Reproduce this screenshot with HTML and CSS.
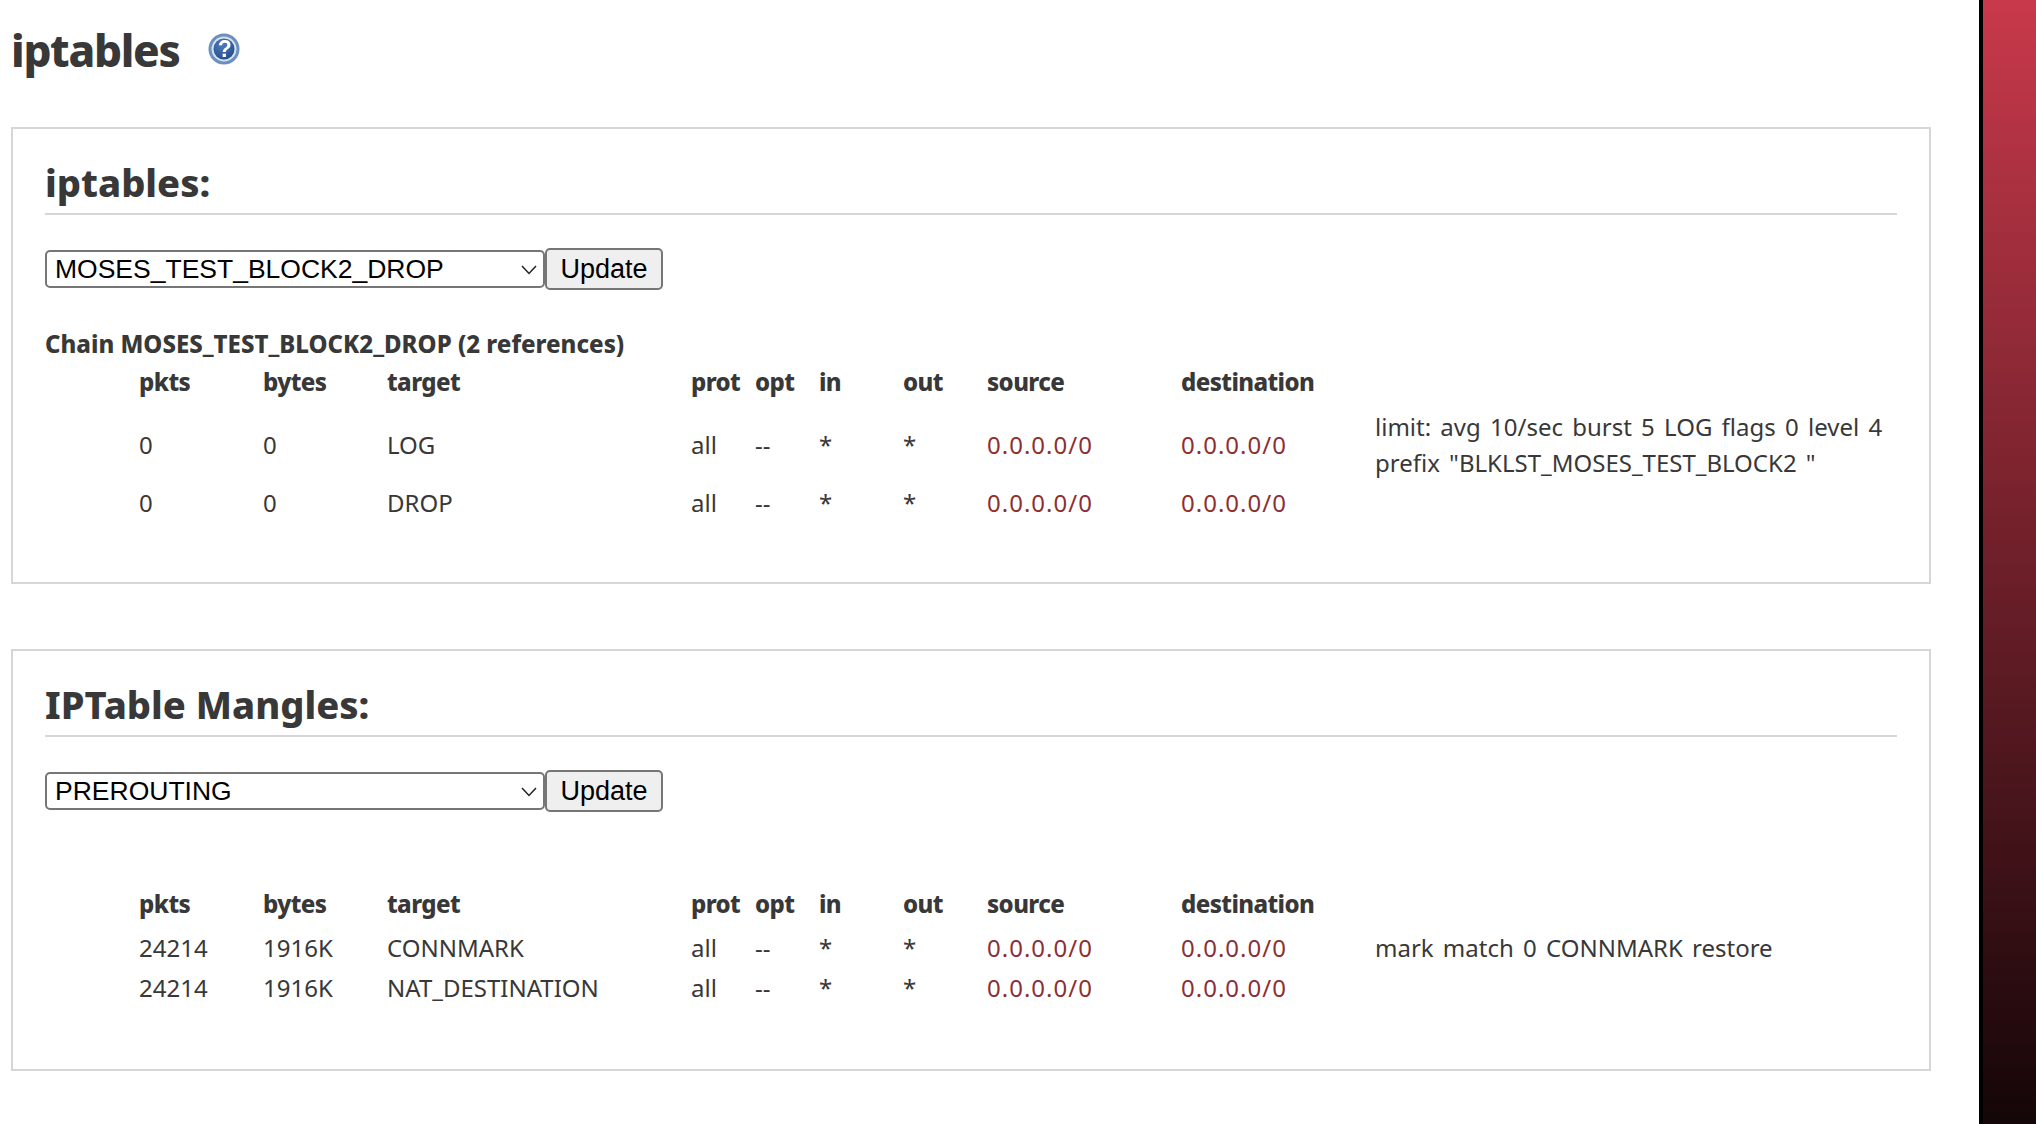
FILE: index.html
```html
<!DOCTYPE html>
<html lang="en">
<head>
    <meta charset="UTF-8">
    <title>iptables</title>
    <link rel="stylesheet" href="styles.css">
</head>
<body>
    <div class="layout">
        <main class="content">
            <h1 class="page-title">iptables
                <svg class="help-icon" viewBox="0 0 32 32" width="32" height="32">
                    <defs>
                        <radialGradient id="helpFill" cx="40%" cy="30%" r="75%">
                            <stop offset="0" stop-color="#4f7cb8"/>
                            <stop offset="1" stop-color="#254c8c"/>
                        </radialGradient>
                        <filter id="soften"><feGaussianBlur stdDeviation="0.45"/></filter>
                    </defs>
                    <g filter="url(#soften)">
                        <circle cx="16" cy="16" r="15.5" fill="#6a8fc0"/>
                        <circle cx="16" cy="16" r="12.5" fill="#d5e0ee"/>
                        <circle cx="16" cy="16" r="10.5" fill="url(#helpFill)"/>
                        <text x="16" y="24" text-anchor="middle" class="help-mark">?</text>
                    </g>
                </svg>
            </h1>

            <section class="panel">
                <h2 class="panel-title">iptables:</h2>
                <form class="chain-form">
                    <div class="select-wrap">
                        <select><option>MOSES_TEST_BLOCK2_DROP</option></select>
                        <svg class="select-arrow" viewBox="0 0 16 10" width="16" height="10"><path d="M1 1l7 7.5L15 1" fill="none" stroke="#222" stroke-width="1.5"/></svg>
                    </div>
                    <button type="button">Update</button>
                </form>
                <h4 class="chain-name">Chain MOSES_TEST_BLOCK2_DROP (2 references)</h4>
                <table class="rules">
                    <tr>
                        <th class="c-pkts">pkts</th><th class="c-bytes">bytes</th><th class="c-target">target</th>
                        <th class="c-prot">prot</th><th class="c-opt">opt</th><th class="c-in">in</th><th class="c-out">out</th>
                        <th class="c-source">source</th><th class="c-dest">destination</th><th class="c-extra"></th>
                    </tr>
                    <tr class="row-long">
                        <td>0</td><td>0</td><td>LOG</td><td>all</td><td>--</td><td>*</td><td>*</td>
                        <td class="addr">0.0.0.0/0</td><td class="addr">0.0.0.0/0</td>
                        <td>limit: avg 10/sec burst 5 LOG flags 0 level 4<br>prefix "BLKLST_MOSES_TEST_BLOCK2 "</td>
                    </tr>
                    <tr class="row-short">
                        <td>0</td><td>0</td><td>DROP</td><td>all</td><td>--</td><td>*</td><td>*</td>
                        <td class="addr">0.0.0.0/0</td><td class="addr">0.0.0.0/0</td><td></td>
                    </tr>
                </table>
            </section>

            <section class="panel panel-mangle">
                <h2 class="panel-title">IPTable Mangles:</h2>
                <form class="chain-form">
                    <div class="select-wrap">
                        <select><option>PREROUTING</option></select>
                        <svg class="select-arrow" viewBox="0 0 16 10" width="16" height="10"><path d="M1 1l7 7.5L15 1" fill="none" stroke="#222" stroke-width="1.5"/></svg>
                    </div>
                    <button type="button">Update</button>
                </form>
                <div class="chain-name-empty"></div>
                <table class="rules">
                    <tr>
                        <th class="c-pkts">pkts</th><th class="c-bytes">bytes</th><th class="c-target">target</th>
                        <th class="c-prot">prot</th><th class="c-opt">opt</th><th class="c-in">in</th><th class="c-out">out</th>
                        <th class="c-source">source</th><th class="c-dest">destination</th><th class="c-extra"></th>
                    </tr>
                    <tr class="row-tight">
                        <td>24214</td><td>1916K</td><td>CONNMARK</td><td>all</td><td>--</td><td>*</td><td>*</td>
                        <td class="addr">0.0.0.0/0</td><td class="addr">0.0.0.0/0</td>
                        <td>mark match 0 CONNMARK restore</td>
                    </tr>
                    <tr class="row-tight">
                        <td>24214</td><td>1916K</td><td>NAT_DESTINATION</td><td>all</td><td>--</td><td>*</td><td>*</td>
                        <td class="addr">0.0.0.0/0</td><td class="addr">0.0.0.0/0</td><td></td>
                    </tr>
                </table>
            </section>
        </main>
        <aside class="sidebar"></aside>
    </div>
</body>
</html>
```

FILE: styles.css
```css
*{
    margin: 0;
    padding: 0;
    box-sizing: border-box;
}

html, body{
    height: 100%;
    overflow: hidden;
}

body{
    background: #fff;
    color: #383838;
    font-family: "Noto Sans", "Open Sans", sans-serif;
    font-size: 24px;
    word-spacing: 3px;
}

.layout{
    display: flex;
    height: 1124px;
}

.content{
    flex: 1;
    padding: 0 48px 0 11px;
}

.sidebar{
    width: 57px;
    border-left: 4px solid #000;
    background: linear-gradient(#c8394b, #000) 0 0 / 100% 1250px no-repeat;
}

.page-title{
    display: flex;
    align-items: center;
    height: 100px;
    font-size: 44px;
    font-weight: 800;
    letter-spacing: -1.3px;
}

.help-icon{
    margin-left: 28px;
    margin-bottom: 2px;
}

.help-mark{
    fill: #fff;
    font-family: "Liberation Sans", sans-serif;
    font-size: 23px;
    font-weight: 700;
}

.panel{
    height: 457px;
    margin-top: 27px;
    padding: 28px 32px 0;
    border: 2px solid #d6d6d6;
}

.panel-mangle{
    height: 422px;
    margin-top: 65px;
}

.panel-title{
    height: 58px;
    border-bottom: 2px solid #d6d6d6;
    font-size: 38px;
    font-weight: 800;
    line-height: 50px;
    word-spacing: 0;
}

.chain-form{
    display: flex;
    align-items: center;
    margin-top: 33px;
}

.select-wrap{
    position: relative;
    display: flex;
}

.select-wrap select{
    width: 500px;
    height: 38px;
    padding-left: 8px;
    appearance: none;
    border: 2px solid #767676;
    border-radius: 5px;
    background: #fff;
    color: #000;
    font-family: "Liberation Sans", sans-serif;
    font-size: 26.5px;
}

.select-arrow{
    position: absolute;
    top: 15px;
    right: 8px;
    pointer-events: none;
}

.chain-form button{
    width: 118px;
    height: 42px;
    border: 2px solid #767676;
    border-radius: 5px;
    background: #efefef;
    color: #000;
    font-family: "Liberation Sans", sans-serif;
    font-size: 27px;
}

.chain-name{
    margin-top: 39px;
    font-size: 24px;
    font-weight: 800;
    line-height: 30px;
    word-spacing: 0;
}

.chain-name-empty{
    height: 69px;
}

.rules{
    width: 100%;
    border-collapse: collapse;
    table-layout: fixed;
    margin-top: 4px;
}

.rules th{
    padding: 3px 0;
    text-align: left;
    font-weight: 800;
    line-height: 32px;
    letter-spacing: -0.6px;
}

.panel-mangle .rules th{
    padding-bottom: 7px;
}

.rules td{
    vertical-align: middle;
}

.rules .row-long td{
    padding: 8px 0 0;
    line-height: 36px;
}

.rules .row-short td{
    padding: 4px 0 0;
    line-height: 36px;
}

.rules .row-tight td{
    padding: 3px 0 1px;
    line-height: 36px;
}

.rules .addr{
    color: #8c2f33;
    letter-spacing: 1px;
}

.c-pkts{ width: 218px; padding-left: 94px !important; }
.c-bytes{ width: 124px; }
.c-target{ width: 304px; }
.c-prot{ width: 64px; }
.c-opt{ width: 64px; }
.c-in{ width: 84px; }
.c-out{ width: 84px; }
.c-source{ width: 194px; }
.c-dest{ width: 194px; }

.rules td:first-child{
    padding-left: 94px;
}
```
